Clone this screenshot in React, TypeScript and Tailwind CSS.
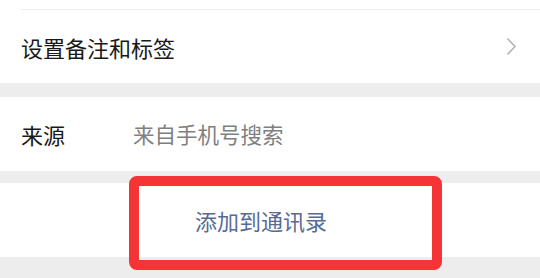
export default function App() {
  return (
    <div
      className="w-[540px] h-[278px] bg-[#ededed] overflow-hidden"
      style={{ fontFamily: '"Noto Sans CJK SC", "Noto Sans", sans-serif' }}
    >
      <div className="bg-white">
        <div className="h-[9px]" />
        <div className="ml-[21px] h-px bg-[#ececec]" />
        <div className="h-[73px] flex items-center justify-between pl-[21px] pr-[23px]">
          <span className="text-[22px] text-[#191919] leading-none">设置备注和标签</span>
          <svg width="11" height="19" viewBox="0 0 11 19" fill="none">
            <path d="M1.5 1.5 L9 9.5 L1.5 17.5" stroke="#b3b3b3" strokeWidth="1.6" />
          </svg>
        </div>
      </div>
      <div className="h-[14px]" />
      <div className="bg-white h-[74px] flex items-center pl-[21px]">
        <span className="w-[112px] text-[22px] text-[#191919] leading-none">来源</span>
        <span className="text-[21.5px] text-[#7f7f7f] leading-none">来自手机号搜索</span>
      </div>
      <div className="h-[12px]" />
      <div className="relative bg-white h-[74px] flex items-center justify-center">
        <span className="text-[22px] text-[#576b95] leading-none ml-[-18px]">添加到通讯录</span>
        <div className="absolute left-[129px] top-[-7px] w-[313px] h-[94px] border-[10px] border-[#f53535] rounded-[8px]" />
      </div>
    </div>
  );
}
